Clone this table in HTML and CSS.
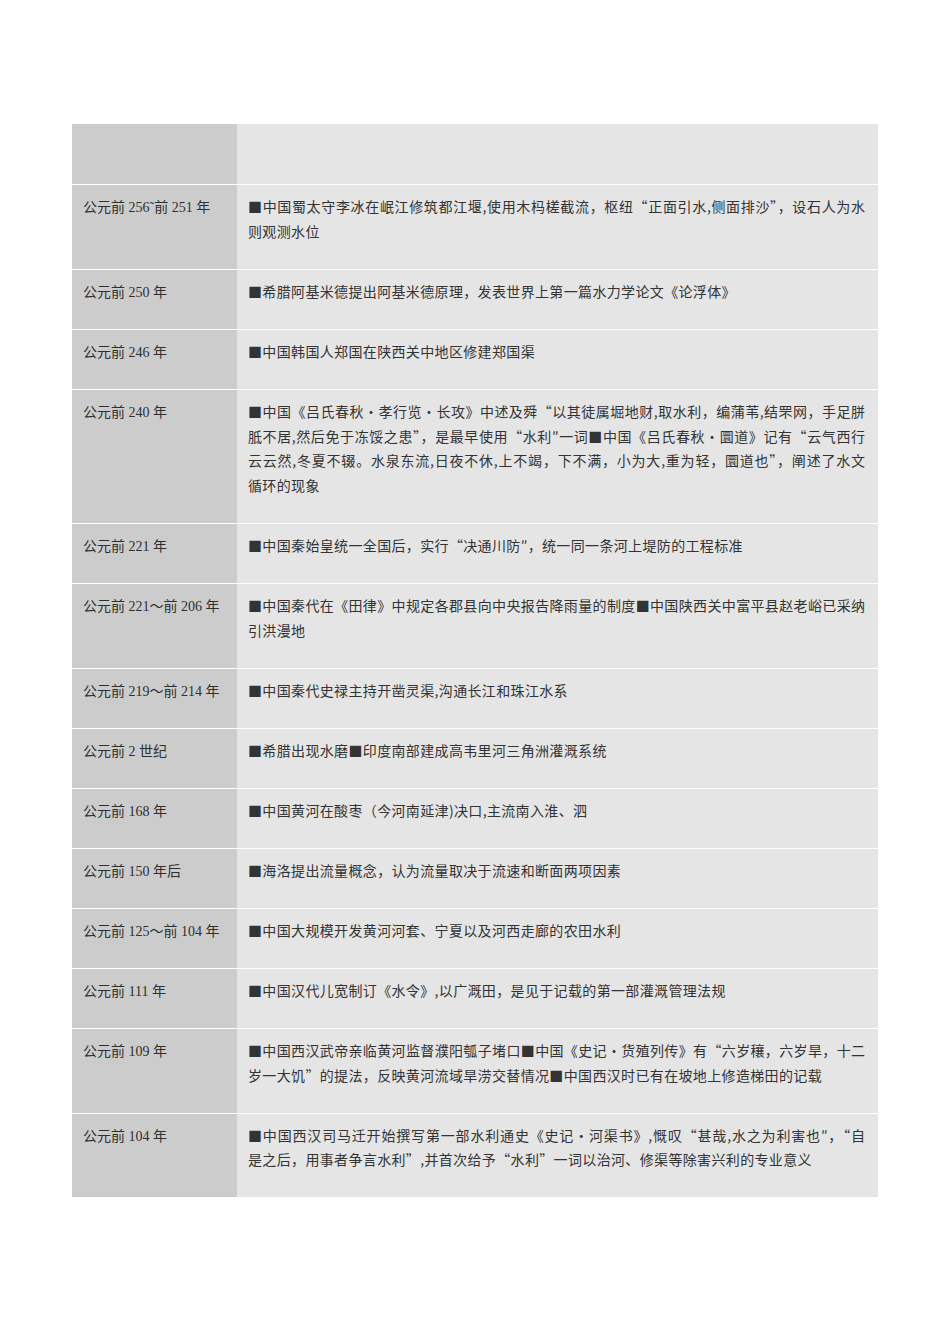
FILE: index.html
```html
<!DOCTYPE html>
<html lang="zh">
<head>
<meta charset="utf-8">
<title>水利大事记</title>
<link rel="stylesheet" href="styles.css">
</head>
<body>
<div class="page">
  <div class="table">
    <div class="row head"><div class="c1"></div><div class="c2"></div></div>

    <div class="row"><div class="c1">公元前 256˜前 251 年</div><div class="c2"><span class="ln j">■中国蜀太守李冰在岷江修筑都江堰,使用木杩槎截流，枢纽“正面引水,侧面排沙”，设石人为水</span><span class="ln">则观测水位</span></div></div>

    <div class="row"><div class="c1">公元前 250 年</div><div class="c2"><span class="ln">■希腊阿基米德提出阿基米德原理，发表世界上第一篇水力学论文《论浮体》</span></div></div>

    <div class="row"><div class="c1">公元前 246 年</div><div class="c2"><span class="ln">■中国韩国人郑国在陕西关中地区修建郑国渠</span></div></div>

    <div class="row"><div class="c1">公元前 240 年</div><div class="c2"><span class="ln j">■中国《吕氏春秋・孝行览・长攻》中述及舜“以其徒属堀地财,取水利，编蒲苇,结罘网，手足胼</span><span class="ln j">胝不居,然后免于冻馁之患”，是最早使用“水利″一词■中国《吕氏春秋・圜道》记有“云气西行</span><span class="ln j">云云然,冬夏不辍。水泉东流,日夜不休,上不竭，下不满，小为大,重为轻，圜道也”，阐述了水文</span><span class="ln">循环的现象</span></div></div>

    <div class="row"><div class="c1">公元前 221 年</div><div class="c2"><span class="ln">■中国秦始皇统一全国后，实行“决通川防″，统一同一条河上堤防的工程标准</span></div></div>

    <div class="row"><div class="c1">公元前 221～前 206 年</div><div class="c2"><span class="ln j">■中国秦代在《田律》中规定各郡县向中央报告降雨量的制度■中国陕西关中富平县赵老峪已采纳</span><span class="ln">引洪漫地</span></div></div>

    <div class="row"><div class="c1">公元前 219～前 214 年</div><div class="c2"><span class="ln">■中国秦代史禄主持开凿灵渠,沟通长江和珠江水系</span></div></div>

    <div class="row"><div class="c1">公元前 2 世纪</div><div class="c2"><span class="ln">■希腊出现水磨■印度南部建成高韦里河三角洲灌溉系统</span></div></div>

    <div class="row"><div class="c1">公元前 168 年</div><div class="c2"><span class="ln">■中国黄河在酸枣（今河南延津)决口,主流南入淮、泗</span></div></div>

    <div class="row"><div class="c1">公元前 150 年后</div><div class="c2"><span class="ln">■海洛提出流量概念，认为流量取决于流速和断面两项因素</span></div></div>

    <div class="row"><div class="c1">公元前 125～前 104 年</div><div class="c2"><span class="ln">■中国大规模开发黄河河套、宁夏以及河西走廊的农田水利</span></div></div>

    <div class="row"><div class="c1">公元前 111 年</div><div class="c2"><span class="ln">■中国汉代儿宽制订《水令》,以广溉田，是见于记载的第一部灌溉管理法规</span></div></div>

    <div class="row"><div class="c1">公元前 109 年</div><div class="c2"><span class="ln j">■中国西汉武帝亲临黄河监督濮阳瓠子堵口■中国《史记・货殖列传》有“六岁穰，六岁旱，十二</span><span class="ln">岁一大饥”的提法，反映黄河流域旱涝交替情况■中国西汉时已有在坡地上修造梯田的记载</span></div></div>

    <div class="row"><div class="c1">公元前 104 年</div><div class="c2"><span class="ln j">■中国西汉司马迁开始撰写第一部水利通史《史记・河渠书》,慨叹“甚哉,水之为利害也″，“自</span><span class="ln">是之后，用事者争言水利”,并首次给予“水利”一词以治河、修渠等除害兴利的专业意义</span></div></div>
  </div>
</div>
</body>
</html>
```

FILE: styles.css
```css
html, body {
  margin: 0;
  padding: 0;
  background: #ffffff;
}

.page {
  padding: 124px 72px 0 72px;
  font-family: "Liberation Serif", "Noto Sans CJK SC", serif;
  font-size: 14px;
  color: #2e2e2e;
}

.table {
  width: 806px;
  display: flex;
  flex-direction: column;
}

.row {
  display: grid;
  grid-template-columns: 165px 641px;
  border-top: 1px solid rgba(255, 255, 255, 0.28);
}

.row.head {
  border-top: none;
  height: 60px;
}

.c1 {
  background: #cccccc;
  padding: 11px 8px 23.25px 11px;
  line-height: 24.75px;
  white-space: nowrap;
}

.c2 {
  background: #e5e5e5;
  padding: 9px 13px 25.25px 11px;
  line-height: 24.75px;
  font-family: "Noto Sans CJK SC", "Liberation Serif", sans-serif;
  color: #333333;
  letter-spacing: 0.35px;
}

.head .c1,
.head .c2 {
  padding: 0;
}

.ln {
  display: block;
  white-space: nowrap;
}

.ln.j {
  text-align: justify;
  text-align-last: justify;
  white-space: normal;
  letter-spacing: 0;
}
```
